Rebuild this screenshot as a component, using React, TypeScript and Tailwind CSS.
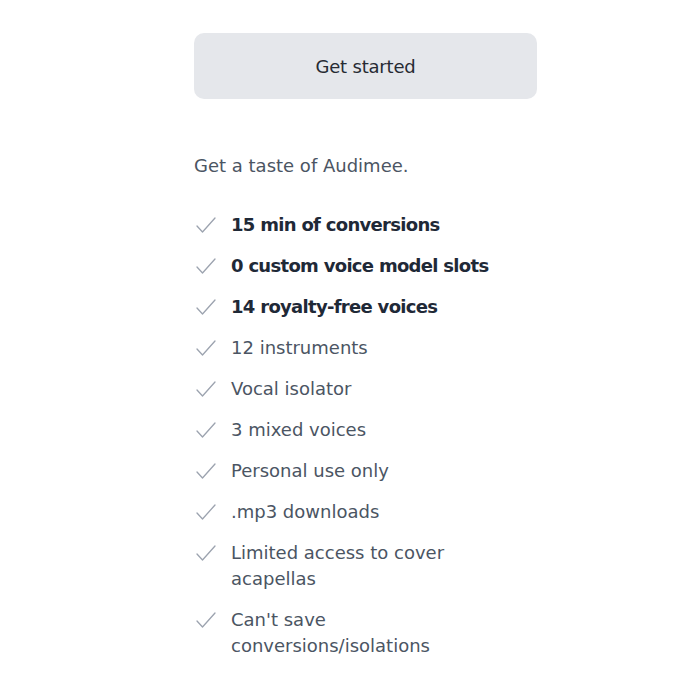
const features: { text: string; bold?: boolean }[] = [
  { text: "15 min of conversions", bold: true },
  { text: "0 custom voice model slots", bold: true },
  { text: "14 royalty-free voices", bold: true },
  { text: "12 instruments" },
  { text: "Vocal isolator" },
  { text: "3 mixed voices" },
  { text: "Personal use only" },
  { text: ".mp3 downloads" },
  { text: "Limited access to cover acapellas" },
  { text: "Can't save conversions/isolations" },
];

const Check = () => (
  <svg
    viewBox="0 0 22 22"
    className="w-[22px] h-[22px] shrink-0 mt-[2px]"
    fill="none"
    stroke="#9ca3af"
    strokeWidth={1.3}
    strokeLinecap="round"
    strokeLinejoin="round"
  >
    <path d="M3 12 L8.5 18 L21 4" />
  </svg>
);

export default function App() {
  return (
    <div className="min-h-screen w-full bg-white font-['DejaVu_Sans',sans-serif]">
      <div className="w-[343px] ml-[194px] pt-[33px]">
        <button className="w-full h-[66px] rounded-[10px] bg-[#e5e7eb] text-[18px] text-[#272b33] tracking-[-0.2px]">
          Get started
        </button>

        <p className="mt-[54px] text-[18px] leading-[26px] text-[#4b5563]">
          Get a taste of Audimee.
        </p>

        <ul className="mt-[33px] flex flex-col gap-[15px]">
          {features.map((f) => (
            <li key={f.text} className="flex items-start gap-[15px]">
              <Check />
              <span
                className={
                  f.bold
                    ? "max-w-[280px] text-[18px] leading-[26px] font-bold tracking-[-0.7px] text-[#1f2937]"
                    : "max-w-[280px] text-[18px] leading-[26px] text-[#4b5563]"
                }
              >
                {f.text}
              </span>
            </li>
          ))}
        </ul>
      </div>
    </div>
  );
}
